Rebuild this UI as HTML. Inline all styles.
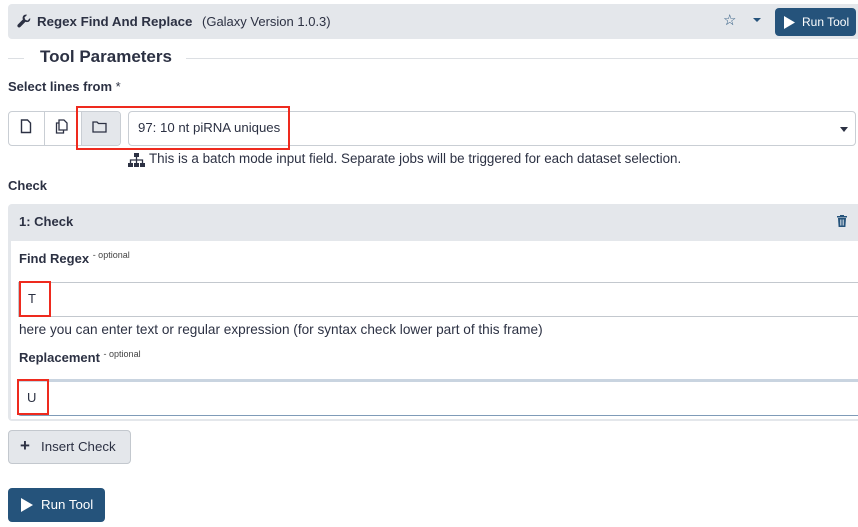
<!DOCTYPE html>
<html><head><style>
*{box-sizing:border-box;margin:0;padding:0}
body{width:858px;height:527px;overflow:hidden;background:#fff;font-family:"Liberation Sans",sans-serif;color:#2c3143;position:relative;font-size:13px}
.a{position:absolute}
.b{font-weight:bold}
.red{position:absolute;border:2.5px solid #ee2a1e}
.opt{font-weight:normal;font-size:9px;color:#444;vertical-align:5px}
</style></head><body>
<div class="a" style="left:8px;top:4px;width:850px;height:35px;background:#e4e7eb;border-radius:4px 0 0 4px"></div>
<svg class="a" style="left:17px;top:14px" width="14" height="14" viewBox="0 0 16 16"><path d="M15 4.5l-3 3-2.5-1-1-2.5 3-3C9.5.3 7 1.2 6.5 3.5c-.3 1.2 0 2 .3 2.6L1 12c-.8.8-.8 2 0 2.8s2 .8 2.8 0l5.9-5.9c.7.3 1.5.5 2.6.3 2.3-.5 3.2-3 2.7-4.7z" fill="#2c3143"/></svg>
<div class="a b" style="left:37px;top:14px;font-size:13.3px">Regex Find And Replace</div>
<div class="a" style="left:202px;top:14px;font-size:13px">(Galaxy Version 1.0.3)</div>
<div class="a" style="left:723px;top:11px;font-size:15px;color:#25537b">☆</div>
<div class="a" style="left:753px;top:18px;width:0;height:0;border-left:4px solid transparent;border-right:4px solid transparent;border-top:4px solid #25537b"></div>
<div class="a" style="left:775px;top:8px;width:81px;height:28px;background:#25537b;border-radius:4px;color:#fff;font-size:12px"><svg class="a" style="left:9px;top:8px" width="11" height="13"><path d="M0 0L11 6.5 0 13z" fill="#fff"/></svg><span class="a" style="left:27px;top:7px">Run Tool</span></div>
<div class="a" style="left:8px;top:58px;width:16px;height:1px;background:#dcdfe3"></div>
<div class="a" style="left:186px;top:58px;width:672px;height:1px;background:#dcdfe3"></div>
<div class="a b" style="left:40px;top:47px;font-size:17px">Tool Parameters</div>
<div class="a b" style="left:8px;top:79px">Select lines from <span style="font-weight:normal">*</span></div>
<div class="a" style="left:8px;top:111px;width:113px;height:35px;border:1px solid #c9ced4;border-radius:4px;overflow:hidden">
<div class="a" style="left:35px;top:0;width:1px;height:35px;background:#c9ced4"></div>
<div class="a" style="left:72px;top:0;width:41px;height:35px;background:#e4e7eb;border-left:1px solid #c9ced4"></div>
</div>
<svg class="a" style="left:20px;top:119px" width="12" height="15" viewBox="0 0 12 15"><path d="M1.5 1h6l3 3v9.5h-9z" fill="none" stroke="#2c3143" stroke-width="1.4"/></svg>
<svg class="a" style="left:55px;top:119px" width="14" height="15" viewBox="0 0 14 15"><path d="M4 1h5l3 3v7H4z M4 4H1.5v10h7v-3" fill="none" stroke="#2c3143" stroke-width="1.3"/></svg>
<svg class="a" style="left:92px;top:121px" width="15" height="12" viewBox="0 0 15 12"><path d="M1 1h4l1.5 1.5H14v8.5H1z" fill="none" stroke="#2c3143" stroke-width="1.3"/></svg>
<div class="a" style="left:128px;top:111px;width:728px;height:35px;border:1px solid #c9ced4;border-radius:4px"></div>
<div class="a" style="left:138px;top:120px;font-size:13.2px">97: 10 nt piRNA uniques</div>
<div class="a" style="left:840px;top:127px;border-left:4px solid transparent;border-right:4px solid transparent;border-top:5px solid #2c3143"></div>
<div class="red" style="left:76px;top:106px;width:214px;height:44px"></div>
<svg class="a" style="left:128px;top:153px" width="17" height="14" viewBox="0 0 17 14"><rect x="6" y="0" width="5" height="4" fill="#2c3143"/><path d="M8.5 4v3M2.5 10V7h12v3M8.5 7v3" stroke="#2c3143" stroke-width="1.3" fill="none"/><rect x="0" y="10" width="5" height="4" fill="#2c3143"/><rect x="6" y="10" width="5" height="4" fill="#2c3143"/><rect x="12" y="10" width="5" height="4" fill="#2c3143"/></svg>
<div class="a" style="left:149px;top:151px;font-size:13.4px">This is a batch mode input field. Separate jobs will be triggered for each dataset selection.</div>
<div class="a b" style="left:8px;top:178px">Check</div>
<div class="a" style="left:8px;top:204px;width:850px;height:217px;background:#e4e7eb;border-radius:4px 0 0 4px"></div>
<div class="a" style="left:11px;top:241px;width:847px;height:178px;background:#fff"></div>
<div class="a b" style="left:19px;top:214px">1: Check</div>
<svg class="a" style="left:837px;top:215px" width="10" height="12" viewBox="0 0 10 12"><rect x="0" y="1" width="10" height="1.5" fill="#25537b"/><rect x="3" y="0" width="4" height="1.5" fill="#25537b"/><path d="M1 3h8l-.6 9H1.6z" fill="#25537b"/><path d="M3.5 4.5v6M5 4.5v6M6.5 4.5v6" stroke="#fff" stroke-width=".6"/></svg>
<div class="a b" style="left:19px;top:250px">Find Regex <span class="opt">- optional</span></div>
<div class="a" style="left:18px;top:282px;width:840px;height:35px;border:1px solid #c3c8ce;border-right:none"></div>
<div class="a" style="left:28px;top:291px">T</div>
<div class="red" style="left:19px;top:281px;width:32px;height:36px"></div>
<div class="a" style="left:19px;top:322px;font-size:13.6px">here you can enter text or regular expression (for syntax check lower part of this frame)</div>
<div class="a b" style="left:19px;top:349px">Replacement <span class="opt">- optional</span></div>
<div class="a" style="left:17px;top:379px;width:841px;height:37px;border:1px solid #7f9bb8;border-top:3px solid #c9d4e0;border-right:none;border-radius:4px 0 0 4px"></div>
<div class="a" style="left:27px;top:390px">U</div>
<div class="red" style="left:17px;top:379px;width:32px;height:36px"></div>
<div class="a" style="left:8px;top:430px;width:123px;height:34px;background:#e4e7eb;border:1px solid #c3c8ce;border-radius:4px"></div>
<div class="a b" style="left:20px;top:436px;font-size:17px">+</div>
<div class="a" style="left:41px;top:439px;font-size:13.3px">Insert Check</div>
<div class="a" style="left:8px;top:488px;width:97px;height:34px;background:#25537b;border-radius:4px;color:#fff"><svg class="a" style="left:13px;top:10px" width="12" height="14"><path d="M0 0L12 7 0 14z" fill="#fff"/></svg><span class="a" style="left:33px;top:9px;font-size:13.3px">Run Tool</span></div>
</body></html>
